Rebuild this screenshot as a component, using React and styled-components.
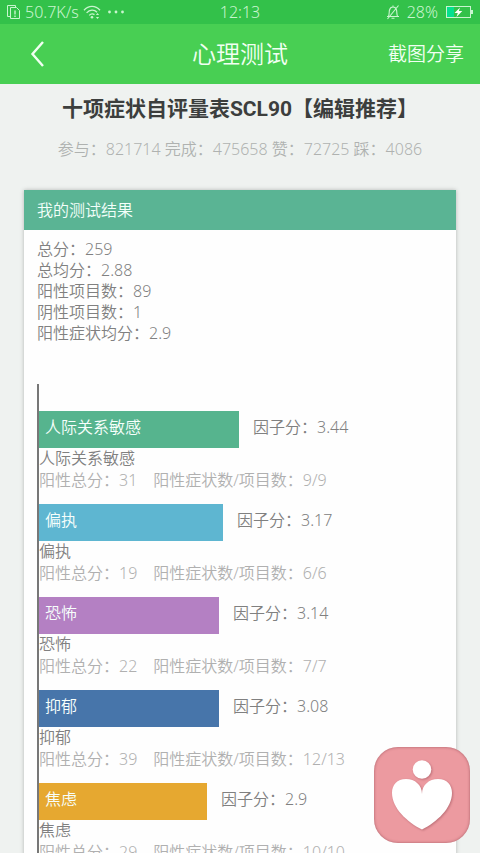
import React from 'react'
import styled, { createGlobalStyle } from 'styled-components';

const summary = [
  { name: '总分', value: '259' },
  { name: '总均分', value: '2.88' },
  { name: '阳性项目数', value: '89' },
  { name: '阴性项目数', value: '1' },
  { name: '阳性症状均分', value: '2.9' },
];

const factors = [
  { name: '人际关系敏感', score: '3.44', total: 31, items: '9/9', percent: 50, color: '#56b48e' },
  { name: '偏执', score: '3.17', total: 19, items: '6/6', percent: 46, color: '#5eb6d1' },
  { name: '恐怖', score: '3.14', total: 22, items: '7/7', percent: 45, color: '#b480c3' },
  { name: '抑郁', score: '3.08', total: 39, items: '12/13', percent: 45, color: '#4775aa' },
  { name: '焦虑', score: '2.9', total: 29, items: '10/10', percent: 42, color: '#e6a830' },
];

const StatusBar = () => (
  <Status>
    <StatusSide>
      <svg width='14' height='16' viewBox='0 0 14 16' fill='none' stroke='currentColor'>
        <path d='M3.5 12.5h-3v-11h8v2' />
        <path d='M3.5 3.5h6l3 3v8h-9z' />
        <path d='M8 6.5v4M8 11.5v1.5' strokeWidth='1.4' />
      </svg>
      <StatusText>50.7K/s</StatusText>
      <svg width='18' height='16' viewBox='0 0 18 16' fill='none' stroke='currentColor' strokeWidth='1.3'>
        <path d='M1 6.2C5.5 1 12.5 1 17 6.2M3.6 8.9C6.7 5.4 11.3 5.4 14 8.3M6.2 11.4C7.8 9.6 9.8 9.5 11.5 10.6' />
        <circle cx='9' cy='13.3' r='1.3' fill='currentColor' stroke='none' />
        <path d='M14.5 9l1.6 2h-3.2zM14.5 15l1.6-2h-3.2z' fill='currentColor' stroke='none' />
      </svg>
      <svg width='20' height='16' viewBox='0 0 20 16' fill='currentColor'>
        <circle cx='4.5' cy='8' r='1.4' />
        <circle cx='11' cy='8' r='1.4' />
        <circle cx='17.5' cy='8' r='1.4' />
      </svg>
    </StatusSide>
    <StatusText>12:13</StatusText>
    <StatusSide $end>
      <svg width='14' height='16' viewBox='0 0 14 16' fill='none' stroke='currentColor' strokeWidth='1.1'>
        <path d='M1 12.5h12M2.5 12.3C3.4 10.5 3 8 3.5 6 4 4 5.4 3 7 3s3 1 3.5 3c.5 2 .1 4.5 1 6.3M5.5 14.3h3M7 3V1.5M12.5 1.5L1.5 15' />
      </svg>
      <StatusText>28%</StatusText>
      <svg width='28' height='14' viewBox='0 0 28 14' fill='none'>
        <rect x='1.5' y='1.5' width='24' height='11' stroke='#c9f5cf' />
        <rect x='2' y='2' width='7' height='10' fill='#05e08f' />
        <path d='M26 5h2v4h-2z' fill='#c9f5cf' />
        <path d='M15 2.5L9.5 8h3.3L11.5 12l5.8-6h-3.5z' fill='#fff' />
      </svg>
    </StatusSide>
  </Status>
)

const FactorRow = ({ factor }) => (
  <Factor>
    <BarLine>
      <Bar style={{ width: `${factor.percent}%` }} $color={factor.color}>{factor.name}</Bar>
      <Score>因子分：{factor.score}</Score>
    </BarLine>
    <FactorName>{factor.name}</FactorName>
    <FactorDetail>
      <span>阳性总分：{factor.total}</span>
      <span>阳性症状数/项目数：{factor.items}</span>
    </FactorDetail>
  </Factor>
)

const App = () => {
  return (
    <Wrapper>
      <GlobalStyle />
      <StatusBar />
      <Header>
        <BackButton aria-label='返回'>
          <svg width='15' height='28' viewBox='0 0 15 28' fill='none' stroke='currentColor' strokeWidth='2.4'>
            <path d='M13 2L2.5 14 13 26' />
          </svg>
        </BackButton>
        <HeaderTitle>心理测试</HeaderTitle>
        <ShareButton>截图分享</ShareButton>
      </Header>

      <Content>
        <Title>十项症状自评量表SCL90【编辑推荐】</Title>
        <Meta>参与：821714 完成：475658 赞：72725 踩：4086</Meta>

        <Card>
          <CardTitle>我的测试结果</CardTitle>
          <CardBody>
            <Summary>
              {summary.map((item) => (
                <li key={item.name}>{item.name}：{item.value}</li>
              ))}
            </Summary>
            <Chart>
              {factors.map((factor) => (
                <FactorRow key={factor.name} factor={factor} />
              ))}
            </Chart>
          </CardBody>
        </Card>
      </Content>

      <FloatButton aria-label='心理咨询'>
        <svg width='96' height='96' viewBox='0 0 96 96' fill='#fff'>
          <circle cx='48' cy='22.5' r='9.3' />
          <path d='M48 47C48 38 41 32 32 32 23 32 18 38 18 46 18 61 33 75 48 82.5 63 75 78 61 78 46 78 38 73 32 64 32 55 32 48 38 48 47z' />
        </svg>
      </FloatButton>
    </Wrapper>
  )
}

const GlobalStyle = createGlobalStyle`
  * {
    box-sizing: border-box;
  }

  body {
    margin: 0;
    font-family: 'Noto Sans', 'Noto Sans CJK SC', sans-serif;
    font-weight: 350;
    font-size: 16px;
    line-height: 21px;
  }

  button {
    border: 0;
    padding: 0;
    background: none;
    color: inherit;
    font: inherit;
    cursor: pointer;
  }

  svg {
    display: block;
  }
`;

const Wrapper = styled.div`
  display: flex;
  flex-direction: column;
  height: 100vh;
  background: #eff2f0;
`;

const Status = styled.div`
  display: grid;
  grid-template-columns: 1fr auto 1fr;
  align-items: center;
  flex: none;
  height: 24px;
  padding: 0 7px;
  background: #33c14a;
  color: #c9f5cf;
`;

const StatusSide = styled.div`
  display: flex;
  align-items: center;
  justify-content: ${({ $end }) => ($end ? 'flex-end' : 'flex-start')};
  gap: ${({ $end }) => ($end ? '7px' : '4px')};
`;

const StatusText = styled.span`
  font-size: 16px;
  line-height: 24px;
`;

const Header = styled.header`
  display: grid;
  grid-template-columns: 1fr auto 1fr;
  align-items: center;
  flex: none;
  height: 60px;
  padding: 0 16px 0 30px;
  background: #48cf53;
  color: #f1fff2;
`;

const BackButton = styled.button`
  justify-self: start;
`;

const HeaderTitle = styled.div`
  margin-left: -14px;
  font-size: 24px;
  line-height: 32px;
`;

const ShareButton = styled.button`
  justify-self: end;
  font-size: 19px;
  line-height: 24px;
`;

const Content = styled.main`
  flex: 1;
  min-height: 0;
  overflow-y: auto;
  padding: 10px 24px 24px;
  scrollbar-width: none;
`;

const Title = styled.h1`
  margin: 0;
  color: #3c3e3d;
  font-family: Roboto, 'Noto Sans CJK SC', sans-serif;
  font-size: 21px;
  font-weight: 700;
  line-height: 30px;
  text-align: center;
  white-space: nowrap;
`;

const Meta = styled.p`
  margin: 15px 0 30px;
  color: #afb2b0;
  text-align: center;
  white-space: nowrap;
`;

const Card = styled.section`
  background: #fefefe;
  box-shadow: 0 0 4px rgba(0, 0, 0, 0.25);
`;

const CardTitle = styled.h2`
  margin: 0;
  padding: 0 13px;
  background: #5ab494;
  color: #f3fffa;
  font-size: 16px;
  font-weight: 350;
  line-height: 40px;
`;

const CardBody = styled.div`
  padding: 9px 13px 24px;
`;

const Summary = styled.ul`
  margin: 0 0 40px;
  padding: 0;
  list-style: none;
  color: #808080;
`;

const Chart = styled.div`
  display: grid;
  gap: 13px;
  padding: 27px 4px 14px 0;
  border-left: 2px solid #777;
`;

const Factor = styled.article`
  color: #808080;
`;

const BarLine = styled.div`
  display: flex;
  gap: 14px;
`;

const Bar = styled.div`
  flex: none;
  padding: 6px 6px 10px;
  background: ${({ $color }) => $color};
  color: #f7fffc;
`;

const Score = styled.div`
  padding-top: 6px;
`;

const FactorName = styled.div``;

const FactorDetail = styled.div`
  display: flex;
  gap: 16px;
  color: #b0b0b0;
  line-height: 22px;
`;

const FloatButton = styled.button`
  position: fixed;
  right: 10px;
  bottom: 10px;
  border-radius: 24px;
  background: #ec9aa0;
  box-shadow: inset 0 0 3px rgba(120, 50, 60, 0.6);

  svg {
    filter: drop-shadow(1px 1px 1px rgba(120, 50, 60, 0.4));
  }
`;

export default App
